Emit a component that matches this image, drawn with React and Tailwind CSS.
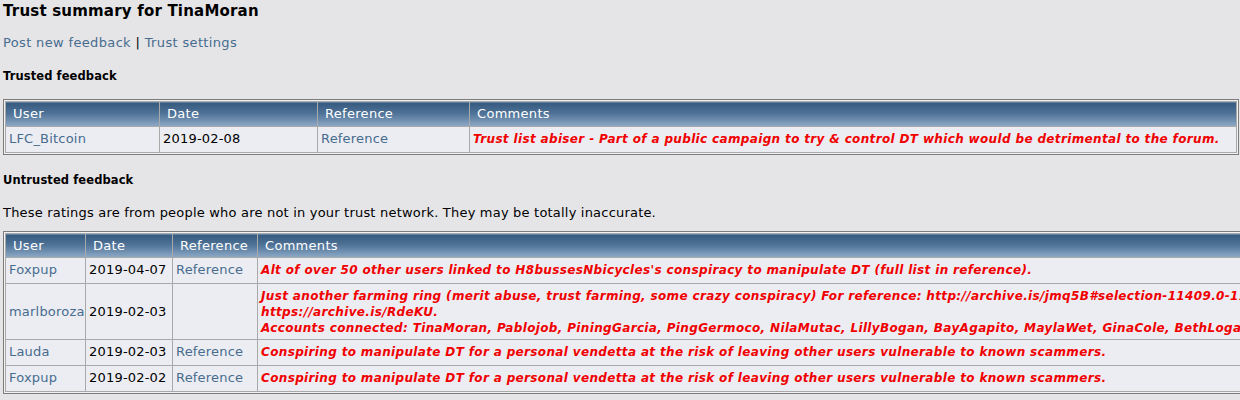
import React from "react";

const F = { fontFamily: "'DejaVu Sans', Verdana, sans-serif" };

function Head({ cols, h = "h-[25px]" }) {
  return (
    <tr>
      {cols.map((c) => (
        <td
          key={c}
          className={
            h +
            " border border-[#a9a9a9] bg-[linear-gradient(to_bottom,#35597e_0%,#4f7297_45%,#8eaac7_100%)] pl-[7px] pr-[4px] text-[13px] tracking-[0.3px] leading-[16px] text-white align-middle whitespace-nowrap"
          }
        >
          {c}
        </td>
      ))}
    </tr>
  );
}

function Cell({ children, className = "pt-[4px] pb-[5px]" }) {
  return (
    <td
      className={
        "border border-[#a9a9a9] bg-[#ecedf3] pl-[3px] pr-[4px] text-[13px] tracking-[0.2px] leading-[16px] align-middle whitespace-nowrap " +
        className
      }
    >
      {children}
    </td>
  );
}

const Link = ({ children }) => <span className="text-[#476c8e]">{children}</span>;
const Red = ({ children }) => (
  <span className="font-bold italic text-[#f00000] text-[12px] tracking-[0.35px] leading-[16px]">
    {children}
  </span>
);

function Wrap({ children, className = "" }) {
  return (
    <div className={"border border-[#7b7b7b] p-px bg-[#f2f2f2] " + className}>
      {children}
    </div>
  );
}

const P2 = "pt-[4px] pb-[5px]";
const PM = "pt-[4px] pb-[3px]";

export default function App() {
  return (
    <div className="w-[1240px] h-[400px] overflow-hidden bg-[#e5e5e8] text-black" style={F}>
      <div className="pl-[3px]">
        <div className="text-[15px] tracking-[0.2px] font-bold leading-[20px] pt-px">Trust summary for TinaMoran</div>
        <div className="mt-[14px] text-[13px] tracking-[0.35px] leading-[16px]">
          <Link>Post new feedback</Link> | <Link>Trust settings</Link>
        </div>
        <div className="mt-[18px] text-[11.5px] tracking-[0.1px] font-bold leading-[14px]">Trusted feedback</div>
      </div>
      <Wrap className="mt-[16px] ml-[3px] w-[1236px]">
        <table className="w-full table-fixed border-collapse">
          <colgroup>
            <col className="w-[154px]" />
            <col className="w-[158px]" />
            <col className="w-[152px]" />
            <col />
          </colgroup>
          <tbody>
            <Head cols={["User", "Date", "Reference", "Comments"]} />
            <tr>
              <Cell><Link>LFC_Bitcoin</Link></Cell>
              <Cell>2019-02-08</Cell>
              <Cell><Link>Reference</Link></Cell>
              <Cell>
                <Red>Trust list abiser - Part of a public campaign to try &amp; control DT which would be detrimental to the forum.</Red>
              </Cell>
            </tr>
          </tbody>
        </table>
      </Wrap>
      <div className="pl-[3px]">
        <div className="mt-[18px] text-[11.5px] tracking-[0.1px] font-bold leading-[14px]">Untrusted feedback</div>
        <div className="mt-[18px] text-[13px] tracking-[0.2px] leading-[16px]">
          These ratings are from people who are not in your trust network. They may be totally inaccurate.
        </div>
      </div>
      <Wrap className="mt-[10px] ml-[3px] w-[1600px]">
        <table className="w-full table-fixed border-collapse">
          <colgroup>
            <col className="w-[80px]" />
            <col className="w-[87px]" />
            <col className="w-[85px]" />
            <col />
          </colgroup>
          <tbody>
            <Head cols={["User", "Date", "Reference", "Comments"]} h="h-[24px]" />
            <tr>
              <Cell className={P2}><Link>Foxpup</Link></Cell>
              <Cell className={P2}>2019-04-07</Cell>
              <Cell className={P2}><Link>Reference</Link></Cell>
              <Cell className={P2}>
                <Red>Alt of over 50 other users linked to H8bussesNbicycles's conspiracy to manipulate DT (full list in reference).</Red>
              </Cell>
            </tr>
            <tr>
              <Cell className={PM}><Link>marlboroza</Link></Cell>
              <Cell className={PM}>2019-02-03</Cell>
              <Cell className={PM}></Cell>
              <Cell className={PM}>
                <Red>
                  Just another farming ring (merit abuse, trust farming, some crazy conspiracy) For reference: http://archive.is/jmq5B#selection-11409.0-11409.91
                  <br />
                  https://archive.is/RdeKU.
                  <br />
                  Accounts connected: TinaMoran, Pablojob, PiningGarcia, PingGermoco, NilaMutac, LillyBogan, BayAgapito, MaylaWet, GinaCole, BethLogan, AnaCruz
                </Red>
              </Cell>
            </tr>
            <tr>
              <Cell className={P2}><Link>Lauda</Link></Cell>
              <Cell className={P2}>2019-02-03</Cell>
              <Cell className={P2}><Link>Reference</Link></Cell>
              <Cell className={P2}>
                <Red>Conspiring to manipulate DT for a personal vendetta at the risk of leaving other users vulnerable to known scammers.</Red>
              </Cell>
            </tr>
            <tr>
              <Cell className={P2}><Link>Foxpup</Link></Cell>
              <Cell className={P2}>2019-02-02</Cell>
              <Cell className={P2}><Link>Reference</Link></Cell>
              <Cell className={P2}>
                <Red>Conspiring to manipulate DT for a personal vendetta at the risk of leaving other users vulnerable to known scammers.</Red>
              </Cell>
            </tr>
          </tbody>
        </table>
      </Wrap>
    </div>
  );
}
